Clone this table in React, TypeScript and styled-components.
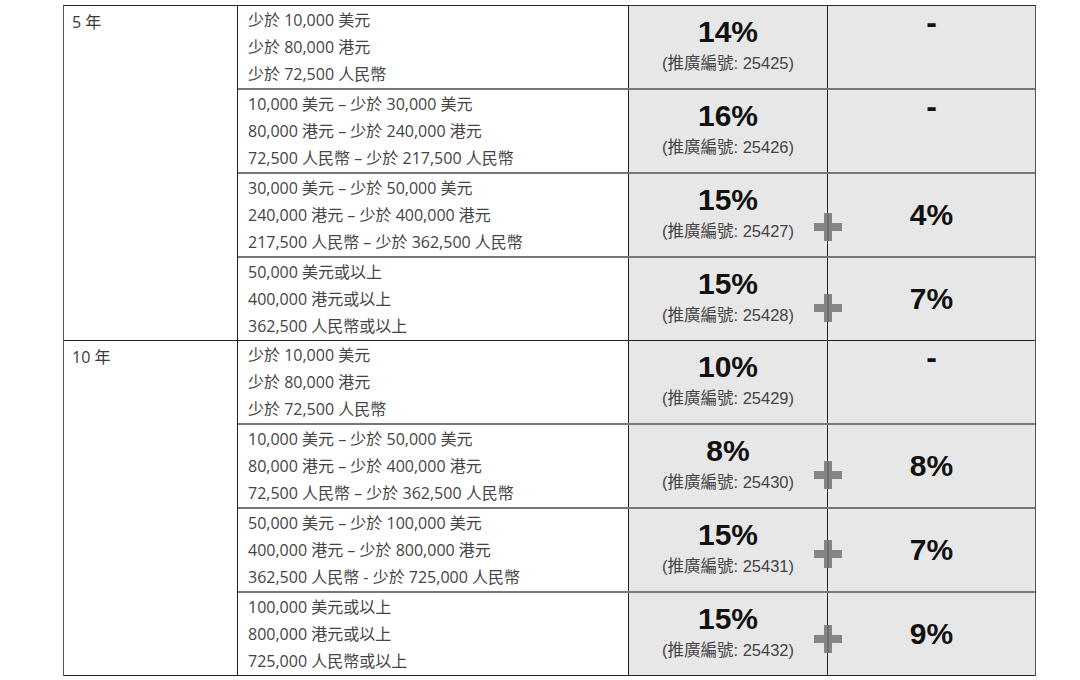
import styled, { createGlobalStyle } from "styled-components";

const GlobalStyle = createGlobalStyle`
  body {
    margin: 0;
    background: #ffffff;
  }
`;

type Tier = {
  lines: string[];
  rate: string;
  code: string;
  bonus?: string;
  plusY?: number;
};

type Term = {
  label: string;
  tiers: Tier[];
};

const terms: Term[] = [
  {
    label: "5 年",
    tiers: [
      {
        lines: ["少於 10,000 美元", "少於 80,000 港元", "少於 72,500 人民幣"],
        rate: "14%",
        code: "25425",
      },
      {
        lines: [
          "10,000 美元 – 少於 30,000 美元",
          "80,000 港元 – 少於 240,000 港元",
          "72,500 人民幣 – 少於 217,500 人民幣",
        ],
        rate: "16%",
        code: "25426",
      },
      {
        lines: [
          "30,000 美元 – 少於 50,000 美元",
          "240,000 港元 – 少於 400,000 港元",
          "217,500 人民幣 – 少於 362,500 人民幣",
        ],
        rate: "15%",
        code: "25427",
        bonus: "4%",
        plusY: 53,
      },
      {
        lines: ["50,000 美元或以上", "400,000 港元或以上", "362,500 人民幣或以上"],
        rate: "15%",
        code: "25428",
        bonus: "7%",
        plusY: 50,
      },
    ],
  },
  {
    label: "10 年",
    tiers: [
      {
        lines: ["少於 10,000 美元", "少於 80,000 港元", "少於 72,500 人民幣"],
        rate: "10%",
        code: "25429",
      },
      {
        lines: [
          "10,000 美元 – 少於 50,000 美元",
          "80,000 港元 – 少於 400,000 港元",
          "72,500 人民幣 – 少於 362,500 人民幣",
        ],
        rate: "8%",
        code: "25430",
        bonus: "8%",
        plusY: 50,
      },
      {
        lines: [
          "50,000 美元 – 少於 100,000 美元",
          "400,000 港元 – 少於 800,000 港元",
          "362,500 人民幣 - 少於 725,000 人民幣",
        ],
        rate: "15%",
        code: "25431",
        bonus: "7%",
        plusY: 45,
      },
      {
        lines: ["100,000 美元或以上", "800,000 港元或以上", "725,000 人民幣或以上"],
        rate: "15%",
        code: "25432",
        bonus: "9%",
        plusY: 46,
      },
    ],
  },
];

const PlusIcon = () => (
  <svg width="28" height="28" viewBox="0 0 28 28">
    <rect x="10" y="0" width="8" height="28" fill="#858585" />
    <rect x="0" y="10" width="28" height="8" fill="#858585" />
    <rect x="13.5" y="0" width="1" height="28" fill="#5a5a5a" />
  </svg>
);

export default function App() {
  return (
    <>
      <GlobalStyle />
      <Table>
        {terms.map((term) => (
          <Group key={term.label}>
            <YearCell>{term.label}</YearCell>
            <Tiers>
              {term.tiers.map((tier) => (
                <TierRow key={tier.code}>
                  <AmountCell>
                    {tier.lines.map((line) => (
                      <AmountLine key={line}>{line}</AmountLine>
                    ))}
                  </AmountCell>
                  <RateCell>
                    <Rate>{tier.rate}</Rate>
                    <Code>(推廣編號: {tier.code})</Code>
                  </RateCell>
                  <BonusCell $hasBonus={!!tier.bonus}>
                    {tier.bonus ? <Rate>{tier.bonus}</Rate> : <Dash>-</Dash>}
                  </BonusCell>
                  {tier.bonus && (
                    <Plus style={{ top: tier.plusY }}>
                      <PlusIcon />
                    </Plus>
                  )}
                </TierRow>
              ))}
            </Tiers>
          </Group>
        ))}
      </Table>
    </>
  );
}

const Table = styled.div`
  margin: 5px 0 0 63px;
  width: 973px;
  box-sizing: border-box;
  border-top: 1px solid #2a2a2a;
  border-left: 1px solid #555;
  border-right: 1px solid #555;
`;

const Group = styled.div`
  display: grid;
  grid-template-columns: 174px 1fr;
  border-bottom: 1px solid #222;
`;

const YearCell = styled.div`
  border-right: 1px solid #222;
  padding: 5px 0 0 8px;
  font-family: "Open Sans", "Noto Sans CJK TC", sans-serif;
  font-size: 16px;
  line-height: 22px;
  color: #3a3a3a;
`;

const Tiers = styled.div`
  display: flex;
  flex-direction: column;
`;

const TierRow = styled.div`
  position: relative;
  display: grid;
  grid-template-columns: 391px 199px 1fr;
  height: 82px;
  border-bottom: 2px solid #777;

  &:last-child {
    border-bottom: none;
  }
`;

const AmountCell = styled.div`
  border-right: 1px solid #222;
  padding: 1px 0 0 10px;
  display: flex;
  flex-direction: column;
`;

const AmountLine = styled.div`
  font-family: "Open Sans", "Noto Sans CJK TC", sans-serif;
  font-size: 16px;
  line-height: 27px;
  color: #444;
  white-space: nowrap;
`;

const RateCell = styled.div`
  background: #e7e7e7;
  border-right: 1px solid #222;
  display: flex;
  flex-direction: column;
  align-items: center;
  padding-top: 10px;
`;

const Rate = styled.div`
  font-family: "Liberation Sans", Arial, sans-serif;
  font-weight: 700;
  font-size: 30px;
  line-height: 32px;
  color: #111;
`;

const Code = styled.div`
  margin-top: 4px;
  font-family: "Liberation Sans", "Noto Sans CJK TC", sans-serif;
  font-size: 16.5px;
  line-height: 22px;
  color: #444;
`;

const BonusCell = styled.div<{ $hasBonus: boolean }>`
  background: #e7e7e7;
  display: flex;
  justify-content: center;
  align-items: ${(p) => (p.$hasBonus ? "center" : "flex-start")};
`;

const Dash = styled.div`
  font-family: "Liberation Sans", Arial, sans-serif;
  font-weight: 700;
  font-size: 32px;
  line-height: 32px;
  color: #111;
`;

const Plus = styled.div`
  position: absolute;
  left: 576px;
  width: 28px;
  height: 28px;
  margin-top: -14px;
`;
